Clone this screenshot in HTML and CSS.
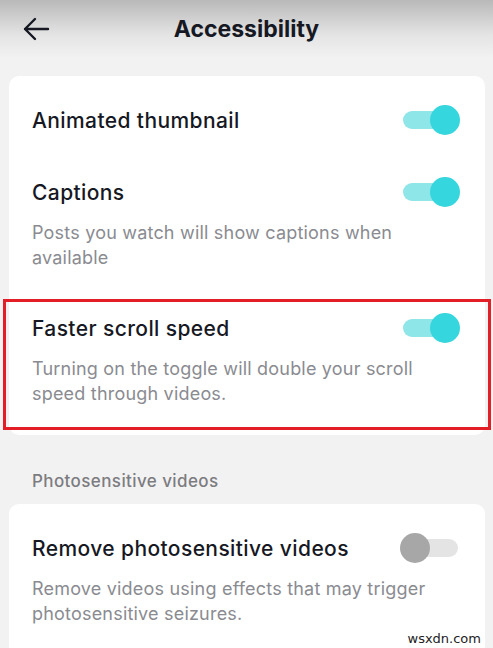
FILE: index.html
```html
<!DOCTYPE html>
<html lang="en">
  <head>
    <meta charset="UTF-8" />
    <meta name="viewport" content="width=device-width, initial-scale=1.0" />
    <title>Accessibility</title>
    <link rel="stylesheet" href="styles.css">
  </head>
  <body>
    <div class="header">
      <svg class="back" width="28" height="24" viewBox="0 0 28 24">
        <path d="M26 12H3M13 2L3 12l10 10" fill="none" stroke="#161823" stroke-width="2.4" stroke-linecap="round" stroke-linejoin="round" />
      </svg>
      <h1>Accessibility</h1>
    </div>

    <div class="card">
      <div class="row">
        <div class="row-top">
          <span class="row-title">Animated thumbnail</span>
          <span class="toggle on"></span>
        </div>
      </div>
      <div class="row">
        <div class="row-top">
          <span class="row-title">Captions</span>
          <span class="toggle on"></span>
        </div>
        <p class="row-desc">Posts you watch will show captions when available</p>
      </div>
      <div class="row highlight">
        <div class="row-top">
          <span class="row-title">Faster scroll speed</span>
          <span class="toggle on"></span>
        </div>
        <p class="row-desc">Turning on the toggle will double your scroll speed through videos.</p>
      </div>
    </div>

    <h3 class="section-label">Photosensitive videos</h3>

    <div class="card card-last">
      <div class="row">
        <div class="row-top">
          <span class="row-title">Remove photosensitive videos</span>
          <span class="toggle"></span>
        </div>
        <p class="row-desc">Remove videos using effects that may trigger photosensitive seizures.</p>
      </div>
    </div>

    <div class="watermark">wsxdn.com</div>
  </body>
</html>
```

FILE: styles.css
```css
body {
  font-family: Inter, "Noto Sans", sans-serif;
  background-color: #f3f2f3;
  margin: 0;
  padding: 0;
  height: 648px;
  overflow: hidden;
  position: relative;
  color: #161823;
}

.header {
  display: flex;
  align-items: center;
  height: 58px;
  padding: 0 22px;
  background: linear-gradient(#b9b9b9, #e4e4e4 60%, #f3f2f3);
  position: relative;
}

.back {
  display: block;
}

.header h1 {
  position: absolute;
  left: 0;
  right: 0;
  margin: 0;
  text-align: center;
  font-size: 23px;
  font-weight: 700;
  pointer-events: none;
}

.card {
  background-color: #fff;
  margin: 18px 8px 0 9px;
  padding: 8px 25px 7px 23px;
  border-radius: 10px;
}

.card-last {
  margin-top: 12px;
  padding-bottom: 40px;
}

.row {
  padding: 22px 0;
}

.row-top {
  display: flex;
  align-items: center;
  justify-content: space-between;
  height: 28px;
}

.row-title {
  font-size: 21px;
  font-weight: 500;
  letter-spacing: 0.4px;
}

.row-desc {
  margin: 14px 0 0;
  font-size: 18px;
  line-height: 25px;
  letter-spacing: 0.2px;
  color: #8a8b91;
  padding-right: 20px;
}

.highlight {
  position: relative;
}

.highlight::after {
  content: "";
  position: absolute;
  top: 7px;
  bottom: -2px;
  left: -29px;
  right: -31px;
  border: 3px solid #e31e26;
}

.toggle {
  position: relative;
  width: 57px;
  height: 30px;
  flex-shrink: 0;
}

.toggle::before {
  content: "";
  position: absolute;
  left: 0;
  right: 2px;
  top: 6px;
  height: 18px;
  border-radius: 9px;
  background-color: #e4e4e4;
}

.toggle::after {
  content: "";
  position: absolute;
  top: 0;
  left: -3px;
  width: 30px;
  height: 30px;
  border-radius: 50%;
  background-color: #a7a7a7;
}

.toggle.on::before {
  background-color: #8fe6e8;
  right: 8px;
}

.toggle.on::after {
  left: auto;
  right: 0;
  background-color: #35d6dd;
}

.section-label {
  margin: 35px 0 0 32px;
  font-size: 17px;
  line-height: 22px;
  font-weight: 500;
  letter-spacing: 0.4px;
  color: #7c7c80;
}

.watermark {
  position: absolute;
  right: 12px;
  bottom: 2px;
  font-family: "DejaVu Sans", sans-serif;
  font-size: 13px;
  color: #222;
}
```
